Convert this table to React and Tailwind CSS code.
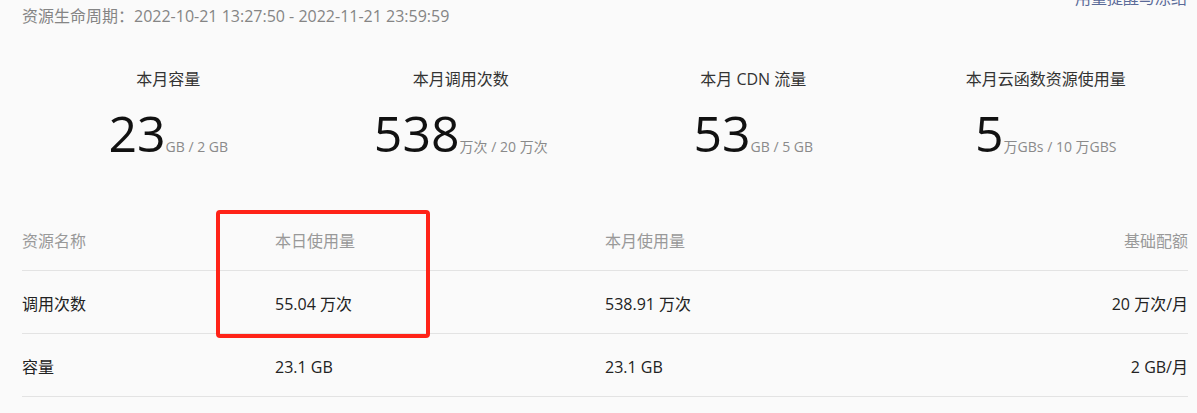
import React from 'react';

const stats = [
  { title: '本月容量', value: '23', unit: 'GB / 2 GB' },
  { title: '本月调用次数', value: '538', unit: '万次 / 20 万次' },
  { title: '本月 CDN 流量', value: '53', unit: 'GB / 5 GB' },
  { title: '本月云函数资源使用量', value: '5', unit: '万GBs / 10 万GBS' },
];

const rows = [
  { name: '调用次数', today: '55.04 万次', month: '538.91 万次', quota: '20 万次/月' },
  { name: '容量', today: '23.1 GB', month: '23.1 GB', quota: '2 GB/月' },
];

const App = () => {
  return (
    <div
      className="relative min-h-screen bg-[#fafafa] px-[22px] overflow-hidden"
      style={{ fontFamily: '"Open Sans", "Noto Sans CJK SC", sans-serif' }}
    >
      {/* Header */}
      <div className="flex justify-between items-start pt-[4px]">
        <div className="text-[16px] leading-[24px] text-[#858585]">
          资源生命周期：2022-10-21 13:27:50 - 2022-11-21 23:59:59
        </div>
        <a className="-mt-[18px] -mr-[12px] text-[16px] leading-[24px] text-[#5a6a98] cursor-pointer">
          用量提醒与冻结
        </a>
      </div>

      {/* Stats */}
      <div className="grid grid-cols-4 w-[1170px] mt-[39px]">
        {stats.map((s) => (
          <div key={s.title} className="flex flex-col items-center">
            <div className="text-[16px] leading-[24px] text-[#333]">{s.title}</div>
            <div className="flex items-baseline mt-[14px]">
              <span className="text-[50px] leading-[56px] text-[#111]">{s.value}</span>
              <span className="text-[14px] text-[#8a8a8a]">{s.unit}</span>
            </div>
          </div>
        ))}
      </div>

      {/* Table */}
      <div className="mt-[47px] w-[1166px] text-[16px]">
        <div className="grid grid-cols-[253px_330px_1fr_auto] items-center h-[63px] pt-[4px] border-b border-[#e3e3e3] text-[#999]">
          <div>资源名称</div>
          <div>本日使用量</div>
          <div>本月使用量</div>
          <div className="text-right">基础配额</div>
        </div>
        {rows.map((r) => (
          <div
            key={r.name}
            className="grid grid-cols-[253px_330px_1fr_auto] items-center h-[63px] pt-[4px] border-b border-[#e3e3e3] text-[#222]"
          >
            <div>{r.name}</div>
            <div>{r.today}</div>
            <div>{r.month}</div>
            <div className="text-right">{r.quota}</div>
          </div>
        ))}
      </div>

      {/* annotation box */}
      <div className="absolute left-[216px] top-[210px] w-[214px] h-[128px] border-[4px] border-[#ff2318] rounded-[4px] pointer-events-none" />
    </div>
  );
};

export default App;
